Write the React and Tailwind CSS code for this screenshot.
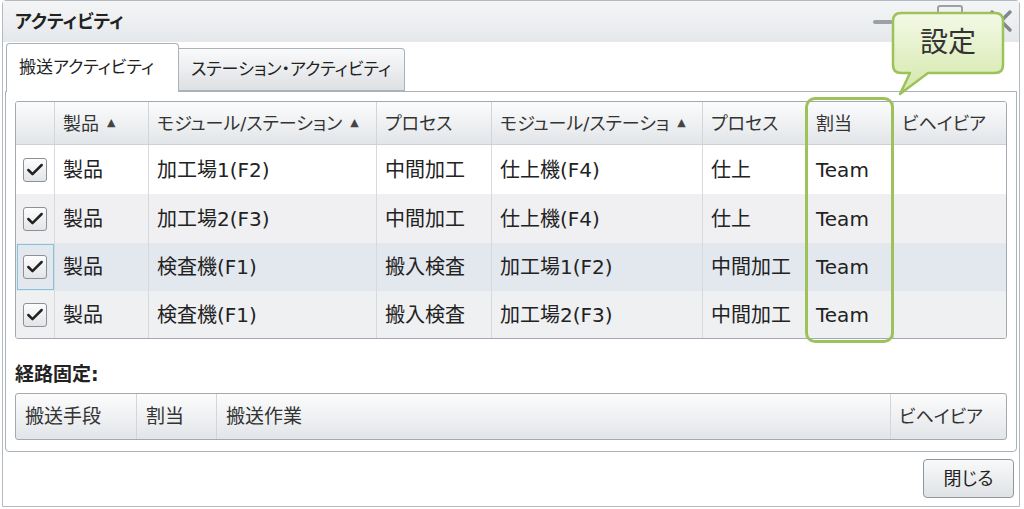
import { Check } from "lucide-react"

const font = "font-['DejaVu_Sans','Noto_Sans_CJK_JP',sans-serif] [font-feature-settings:'palt']"

const cols = "grid grid-cols-[39px_94px_228px_115px_211px_105px_86px_1fr]"

const headers = [
  { label: "", sort: false },
  { label: "製品", sort: true },
  { label: "モジュール/ステーション", sort: true },
  { label: "プロセス", sort: false },
  { label: "モジュール/ステーショ", sort: true },
  { label: "プロセス", sort: false },
  { label: "割当", sort: false },
  { label: "ビヘイビア", sort: false },
]

const rows = [
  { cells: ["製品", "加工場1(F2)", "中間加工", "仕上機(F4)", "仕上", "Team", ""], bg: "bg-white", h: "h-[49px]" },
  { cells: ["製品", "加工場2(F3)", "中間加工", "仕上機(F4)", "仕上", "Team", ""], bg: "bg-[#f0f0f2]", h: "h-[49px]" },
  { cells: ["製品", "検査機(F1)", "搬入検査", "加工場1(F2)", "中間加工", "Team", ""], bg: "bg-[#e3e8ee]", h: "h-[48px]", focus: true },
  { cells: ["製品", "検査機(F1)", "搬入検査", "加工場2(F3)", "中間加工", "Team", ""], bg: "bg-[#eff0f2]", h: "h-[47px]" },
]

const Checkbox = () => (
  <div className="w-[24px] h-[24px] rounded-[3px] border border-[#8b9197] bg-gradient-to-b from-[#fdfdfd] to-[#e2e4e7] flex items-center justify-center">
    <Check size={20} strokeWidth={3} className="text-[#222]" />
  </div>
)

const SortArrow = () => <span className="ml-[8px] text-[11px] text-[#444]">▲</span>

export default function App() {
  return (
    <div className={`relative w-[1024px] h-[509px] bg-white overflow-hidden text-[#222] ${font}`}>
      <div className="ml-[2px] w-[1018px] h-[507px] border border-[#b2b9c0] rounded-t-[4px] flex flex-col bg-white">
        {/* title bar */}
        <div className="h-[41px] flex items-center pl-[12px] pr-[4px] bg-gradient-to-b from-[#f4f5f6] to-[#e5e8eb]">
          <span className="text-[18px] font-bold">アクティビティ</span>
          <div className="ml-auto flex items-center gap-[24px]">
            <div className="w-[40px] h-[4px] rounded-full bg-[#9aa1a8]" />
            <div className="w-[26px] h-[22px] border-2 border-[#9aa1a8] rounded-[3px] -mt-[12px]" />
            <svg width="28" height="28" viewBox="0 0 28 28" className="-mt-[2px]">
              <path d="M5 5 L23 23 M23 5 L5 23" stroke="#80878e" strokeWidth="3.5" strokeLinecap="round" />
            </svg>
          </div>
        </div>

        {/* tabs */}
        <div className="h-[50px] flex items-end pl-[3px] relative z-10 -mb-px">
          <div className="w-[173px] h-[49px] bg-white border border-[#a9b1b9] border-b-0 rounded-t-[4px] flex items-center pl-[12px] text-[17px]">
            搬送アクティビティ
          </div>
          <div className="w-[226px] h-[43px] mb-px bg-gradient-to-b from-[#fafafb] to-[#dde0e4] border border-[#a9b1b9] border-l-0 rounded-tr-[4px] flex items-center pl-[12px] text-[17px]">
            ステーション・アクティビティ
          </div>
        </div>

        {/* tab panel */}
        <div className="mx-[2px] h-[361px] border border-[#a9b1b9] rounded-b-[4px] px-[9px] pt-[9px]">
          <div className="border border-[#a2a9b1] rounded-[3px] overflow-hidden">
            <div className={`${cols} h-[43px] bg-gradient-to-b from-[#fcfcfc] to-[#e2e5e9] border-b border-[#cbd0d5]`}>
              {headers.map((h, i) => (
                <div
                  key={i}
                  className={`flex items-center pl-[8px] text-[18px] text-[#333] whitespace-nowrap overflow-hidden ${i < 7 ? "border-r border-[#d2d6da]" : ""}`}
                >
                  {h.label}
                  {h.sort && <SortArrow />}
                </div>
              ))}
            </div>
            {rows.map((r, ri) => (
              <div key={ri} className={`${cols} ${r.h} ${r.bg}`}>
                <div className={`flex items-center justify-center border-r border-[#d6d9dd] ${r.focus ? "outline outline-[#86c3d6] -outline-offset-2" : ""}`}>
                  <Checkbox />
                </div>
                {r.cells.map((c, ci) => (
                  <div
                    key={ci}
                    className={`flex items-center pl-[8px] text-[20px] whitespace-nowrap ${ci < 6 ? "border-r border-[#d6d9dd]" : ""}`}
                  >
                    {c}
                  </div>
                ))}
              </div>
            ))}
          </div>

          <div className="mt-[26px] text-[19px] font-bold leading-none">経路固定:</div>

          <div className="mt-[9px] h-[47px] border border-[#a2a9b1] rounded-[3px] bg-gradient-to-b from-[#fcfcfc] to-[#e2e5e9] grid grid-cols-[121px_80px_674px_1fr]">
            <div className="flex items-center pl-[9px] text-[19px] text-[#333] border-r border-[#d2d6da]">搬送手段</div>
            <div className="flex items-center pl-[9px] text-[19px] text-[#333] border-r border-[#d2d6da]">割当</div>
            <div className="flex items-center pl-[9px] text-[19px] text-[#333] border-r border-[#d2d6da]">搬送作業</div>
            <div className="flex items-center pl-[8px] text-[18px] text-[#333]">ビヘイビア</div>
          </div>
        </div>

        {/* footer */}
        <div className="flex justify-end pr-[5px] pt-[7px]">
          <button className="w-[91px] h-[39px] rounded-[4px] border border-[#8f969d] bg-gradient-to-b from-[#f9f9f9] to-[#dfe2e5] text-[18px] text-[#222]">
            閉じる
          </button>
        </div>
      </div>

      {/* highlight around 割当 column */}
      <div className="absolute left-[805px] top-[97px] w-[89px] h-[246px] border-[3px] border-[#9dc25a] rounded-[10px] pointer-events-none" />

      {/* callout */}
      <div className="absolute left-[888px] top-[8px] w-[122px] h-[92px]">
        <svg width="122" height="92" viewBox="0 0 122 92" className="absolute inset-0">
          <defs>
            <linearGradient id="bub" x1="0" y1="0" x2="0" y2="1">
              <stop offset="0" stopColor="#f4f9e6" />
              <stop offset="1" stopColor="#d3e8aa" />
            </linearGradient>
          </defs>
          <path
            d="M13 5 H107 Q115 5 115 13 V57 Q115 65 107 65 H40 L12 86 L22 65 H13 Q5 65 5 57 V13 Q5 5 13 5 Z"
            fill="url(#bub)"
            stroke="#9dc25a"
            strokeWidth="2.5"
            strokeLinejoin="round"
          />
        </svg>
        <div className="absolute left-[5px] top-[5px] w-[110px] h-[60px] flex items-center justify-center text-[28px] text-[#333]">
          設定
        </div>
      </div>
    </div>
  )
}
